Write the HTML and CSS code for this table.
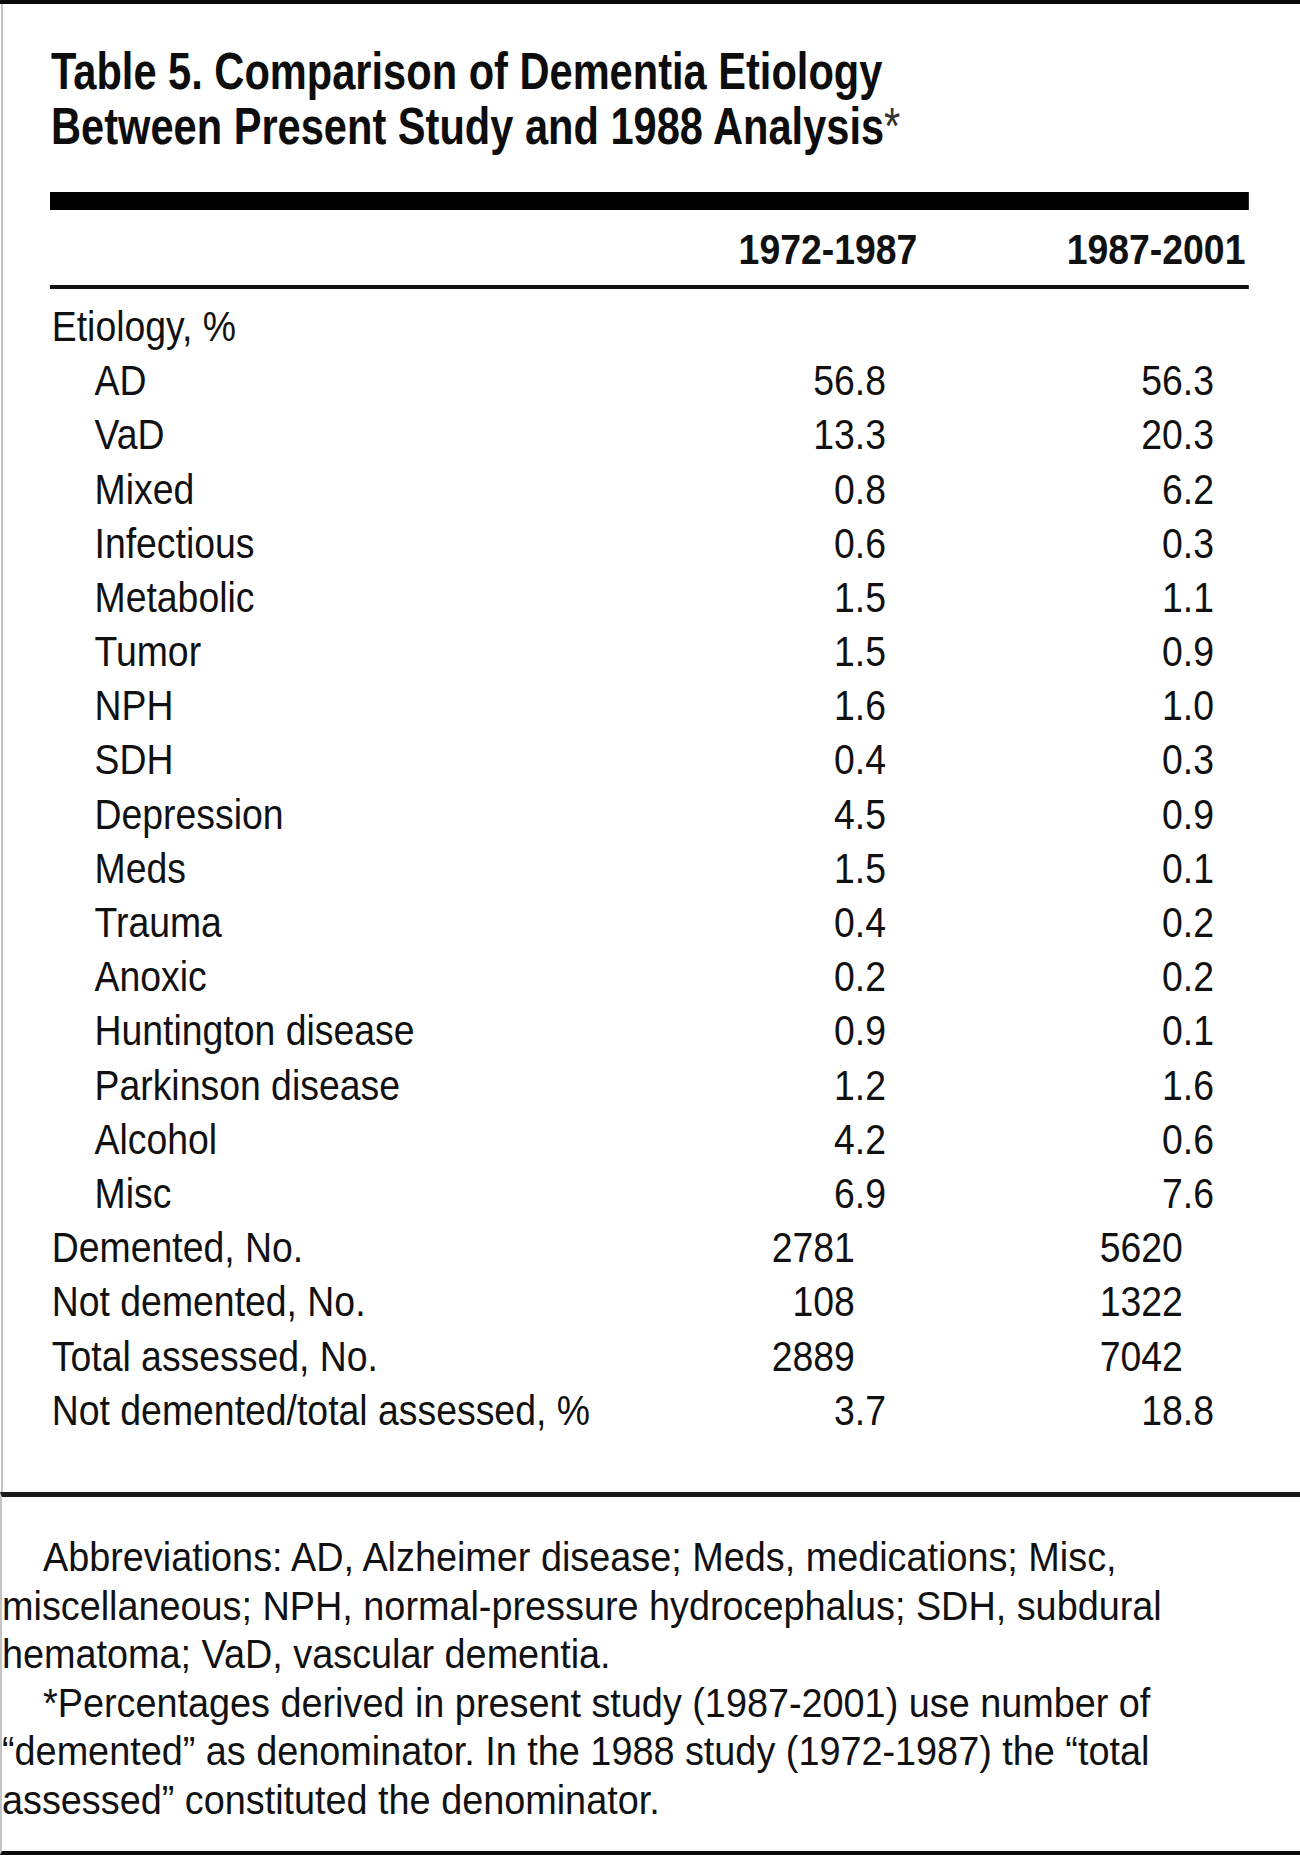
FILE: index.html
```html
<!DOCTYPE html>
<html lang="en">
<head>
<meta charset="utf-8">
<title>Table 5. Comparison of Dementia Etiology</title>
<link rel="stylesheet" href="styles.css">
</head>
<body>
<div class="page">
  <div class="upper">
    <h1 class="title">Table 5. Comparison of Dementia Etiology<br>Between Present Study and 1988 Analysis<span class="ast">*</span></h1>
    <div class="tbl">
      <div class="head">
        <div></div>
        <div class="th">1972-1987</div>
        <div class="th">1987-2001</div>
      </div>
      <div class="body">
        <div class="row"><div class="lab">Etiology, %</div><div class="num"></div><div class="num"></div></div>
        <div class="row"><div class="lab sub">AD</div><div class="num">56.8</div><div class="num">56.3</div></div>
        <div class="row"><div class="lab sub">VaD</div><div class="num">13.3</div><div class="num">20.3</div></div>
        <div class="row"><div class="lab sub">Mixed</div><div class="num">0.8</div><div class="num">6.2</div></div>
        <div class="row"><div class="lab sub">Infectious</div><div class="num">0.6</div><div class="num">0.3</div></div>
        <div class="row"><div class="lab sub">Metabolic</div><div class="num">1.5</div><div class="num">1.1</div></div>
        <div class="row"><div class="lab sub">Tumor</div><div class="num">1.5</div><div class="num">0.9</div></div>
        <div class="row"><div class="lab sub">NPH</div><div class="num">1.6</div><div class="num">1.0</div></div>
        <div class="row"><div class="lab sub">SDH</div><div class="num">0.4</div><div class="num">0.3</div></div>
        <div class="row"><div class="lab sub">Depression</div><div class="num">4.5</div><div class="num">0.9</div></div>
        <div class="row"><div class="lab sub">Meds</div><div class="num">1.5</div><div class="num">0.1</div></div>
        <div class="row"><div class="lab sub">Trauma</div><div class="num">0.4</div><div class="num">0.2</div></div>
        <div class="row"><div class="lab sub">Anoxic</div><div class="num">0.2</div><div class="num">0.2</div></div>
        <div class="row"><div class="lab sub">Huntington disease</div><div class="num">0.9</div><div class="num">0.1</div></div>
        <div class="row"><div class="lab sub">Parkinson disease</div><div class="num">1.2</div><div class="num">1.6</div></div>
        <div class="row"><div class="lab sub">Alcohol</div><div class="num">4.2</div><div class="num">0.6</div></div>
        <div class="row"><div class="lab sub">Misc</div><div class="num">6.9</div><div class="num">7.6</div></div>
        <div class="row"><div class="lab">Demented, No.</div><div class="num int">2781</div><div class="num int">5620</div></div>
        <div class="row"><div class="lab">Not demented, No.</div><div class="num int">108</div><div class="num int">1322</div></div>
        <div class="row"><div class="lab">Total assessed, No.</div><div class="num int">2889</div><div class="num int">7042</div></div>
        <div class="row"><div class="lab">Not demented/total assessed, %</div><div class="num">3.7</div><div class="num">18.8</div></div>
      </div>
    </div>
  </div>
  <div class="notes">
    <p>Abbreviations: AD, Alzheimer disease; Meds, medications; Misc,<br>miscellaneous; NPH, normal-pressure hydrocephalus; SDH, subdural<br>hematoma; VaD, vascular dementia.</p>
    <p>*Percentages derived in present study (1987-2001) use number of<br>“demented” as denominator. In the 1988 study (1972-1987) the “total<br>assessed” constituted the denominator.</p>
  </div>
</div>
</body>
</html>
```

FILE: styles.css
```css
html, body {
  margin: 0;
  padding: 0;
  background: #ffffff;
}

body {
  width: 1300px;
  height: 1855px;
  overflow: hidden;
  font-family: "Liberation Sans", Arial, sans-serif;
  color: #111111;
}

.page {
  width: 1300px;
  height: 1855px;
  box-sizing: border-box;
  border-top: 4px solid #0a0a0a;
  overflow: hidden;
}

.upper {
  margin-left: 1px;
  border-left: 2px solid #c4c4c4;
  padding: 40px 0 53.8px 0;
  overflow: hidden;
}

.title {
  margin: 0 0 0 48px;
  font-weight: 700;
  font-size: 52px;
  line-height: 55px;
  white-space: nowrap;
  transform: scaleX(0.8);
  transform-origin: 0 0;
  color: #0d0d0d;
}

.title .ast {
  font-weight: 400;
  color: #333333;
}

.tbl {
  margin: 38px 0 0 47px;
  width: 1347.2px;
  border-top: 18px solid #000000;
  transform: scaleX(0.89);
  transform-origin: 0 0;
  font-size: 42px;
}

.head,
.row {
  display: grid;
  grid-template-columns: 1fr 370px 368.6px;
}

.head {
  padding: 19.4px 0 13.6px 0;
  line-height: 42px;
  font-weight: 700;
  border-bottom: 4px solid #111111;
}

.th {
  text-align: right;
  padding-right: 4px;
  white-space: nowrap;
}

.body {
  padding-top: 11px;
}

.row {
  height: 54.2px;
  line-height: 54.2px;
}

.lab {
  padding-left: 2px;
  white-space: nowrap;
}

.lab.sub {
  padding-left: 50px;
}

.num {
  text-align: right;
  padding-right: 39.3px;
  white-space: nowrap;
}

.num.int {
  padding-right: calc(39.3px + 0.834em);
}

.notes {
  border-top: 5px solid #1a1a1a;
  border-bottom: 4px solid #0a0a0a;
  border-left: 2px solid #c4c4c4;
  padding: 36.6px 0 26.4px 0;
  overflow: hidden;
}

.notes p {
  margin: 0;
  width: 1370px;
  font-size: 40px;
  line-height: 48.5px;
  text-indent: 43.4px;
  white-space: nowrap;
  transform: scaleX(0.945);
  transform-origin: 0 0;
}
```
